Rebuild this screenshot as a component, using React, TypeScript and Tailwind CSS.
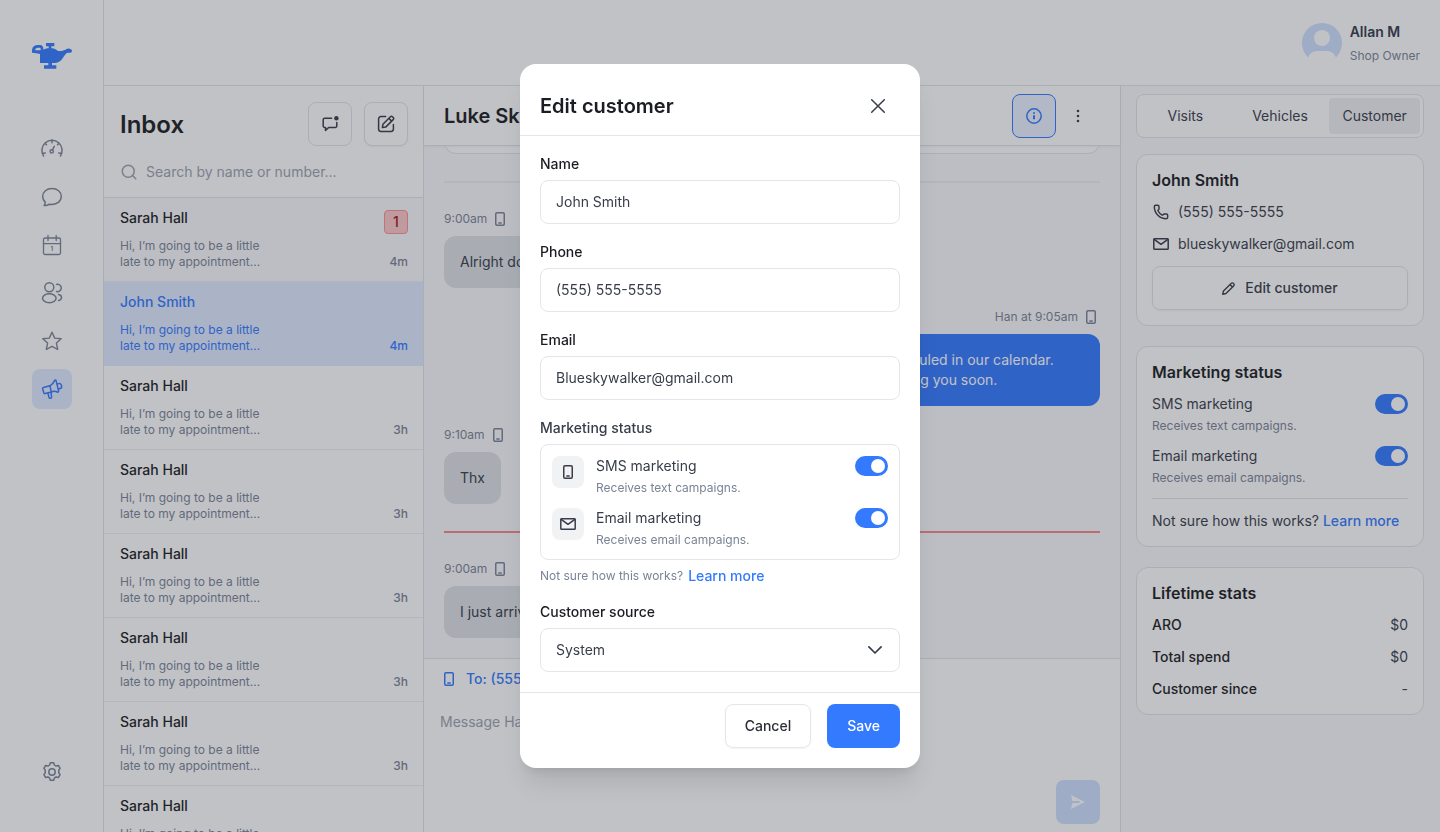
import { useState } from "react";
import type { ReactNode, SVGProps } from "react";
import { Phone, Search } from "lucide-react";
import clsx from "clsx";

type IconProps = SVGProps<SVGSVGElement>;

function Icon({ children, ...props }: IconProps & { children: ReactNode }) {
  return (
    <svg
      viewBox="0 0 24 24"
      width={24}
      height={24}
      fill="none"
      stroke="currentColor"
      strokeWidth={1.5}
      strokeLinecap="round"
      strokeLinejoin="round"
      aria-hidden="true"
      {...props}
    >
      {children}
    </svg>
  );
}

const GaugeIcon = () => (
  <Icon>
    <path d="M3.6 19a10.1 10.1 0 1 1 16.8 0" />
    <path d="M3.3 16.3l2-.4M20.700 16.300l-2-.4M12 3v2.800M5.200 6.500l1.300 1.300M18.800 6.500l-1.300 1.300" />
    <circle cx="11.7" cy="14.4" r="1.6" />
    <path d="M12.400 12.900l1.900-3.600" />
  </Icon>
);

const ChatIcon = () => (
  <Icon>
    <path d="M12 19.400c5.300 0 9.300-3.500 9.300-8s-4-7.900-9.300-7.900-9.300 3.400-9.300 7.900c0 2.200.9 4.200 2.500 5.700.1 1.300-.3 2.400-1.100 3.500 2 .1 3.900-.3 5.300-1.400.8.100 1.700.2 2.600.2Z" />
  </Icon>
);

const CalendarIcon = () => (
  <Icon strokeWidth={1.3}>
    <rect x="3.5" y="5" width="17" height="16.5" rx="1.5" />
    <path d="M3.5 10.7h17M8 2.500v5M16.200 2.500v5" />
    <text
      x="11.8"
      y="18.2"
      textAnchor="middle"
      fontSize="6"
      fontWeight="700"
      fill="currentColor"
      stroke="none"
    >
      1
    </text>
  </Icon>
);

const UsersIcon = () => (
  <Icon>
    <circle cx="9.3" cy="6.200" r="4.500" />
    <ellipse cx="9.3" cy="17.300" rx="6.800" ry="4.500" />
    <path d="M16.500 3.400a3.700 3.700 0 1 1 0 7.100M18.500 13.600c1.800.4 3 1.500 3 2.900s-1.200 2.600-3 3.100" />
  </Icon>
);

const StarIcon = () => (
  <Icon strokeWidth={1.4}>
    <path d="M12 3.200l2.700 5.900 6.500.7-4.800 4.300 1.300 6.400L12 17.300l-5.700 3.200 1.300-6.400-4.800-4.300 6.500-.7Z" />
  </Icon>
);

const MegaphoneIcon = () => (
  <Icon>
    <path d="M3.500 10.400l6.400-1.600 1.500 6.300-6.200 1.500a1.200 1.200 0 0 1-1.400-.9l-1.200-4a1.100 1.100 0 0 1 .9-1.300Z" />
    <path d="M9.900 8.800c2.200-1.100 3.700-2.800 4.700-5.200.3-.7 1.300-.7 1.500 0l2.500 10.400c.2.800-.6 1.400-1.300 1-1.900-1-3.800-1.200-5.900.1M17.200 7.100l1.800-.5c1.300-.3 2.200.8 2.500 2.100.3 1.400 0 2.600-1.200 2.900l-1.900.5M8 16.100l.9 4.100c.2.800.9 1.300 1.600 1.100.8-.2 1.300-.9 1.100-1.700L10.900 15.500" />
  </Icon>
);

const GearIcon = () => (
  <Icon>
    <circle cx="12" cy="12" r="3.200" />
    <path d="M10.300 2.800h3.400l.7 2.300c.6.200 1.200.6 1.700 1l2.300-.6 1.700 2.900-1.400 1.800c.2.900.2 1.700 0 2.600l1.400 1.800-1.700 2.900-2.300-.6c-.5.400-1.100.8-1.700 1l-.7 2.300h-3.400l-.7-2.300c-.6-.2-1.200-.6-1.700-1l-2.300.6-1.700-2.900 1.400-1.800c-.2-.9-.2-1.700 0-2.600L3.900 8.400l1.700-2.900 2.300.6c.5-.4 1.100-.8 1.700-1Z" />
  </Icon>
);

const MobileIcon = (props: IconProps) => (
  <Icon viewBox="0 0 10 14" width={10} height={14} {...props}>
    <rect x=".75" y=".75" width="8.500" height="12.500" rx="1.200" />
    <path d="M3.800 11h2.400" />
  </Icon>
);

const MailIcon = () => (
  <Icon viewBox="0 0 16 12" width={16} height={12}>
    <rect x=".8" y=".8" width="14.400" height="10.400" rx=".8" />
    <path d="M1.200 1.300L8 6.300l6.800-5" />
  </Icon>
);

const PencilIcon = () => (
  <Icon viewBox="0 0 14 14" width={13} height={13}>
    <path d="M.8 13.200l.8-3.500 8.200-8.200a1.700 1.700 0 0 1 2.500 0l.2.200a1.700 1.700 0 0 1 0 2.500l-8.200 8.200-3.500.8ZM8.600 2.800l2.600 2.600" />
  </Icon>
);

const SquarePenIcon = () => (
  <Icon viewBox="0 0 18 18" width={18} height={18}>
    <path d="M8.600 1.600H4A2.400 2.400 0 0 0 1.600 4v10A2.400 2.400 0 0 0 4 16.400h10a2.400 2.400 0 0 0 2.400-2.400V9.400" />
    <path d="M5.400 12.600l.5-3.300 7.500-7.500a1.500 1.500 0 0 1 2.100 0l.7.700a1.500 1.500 0 0 1 0 2.100l-7.500 7.500-3.300.5ZM11.900 3.400l2.700 2.700" />
  </Icon>
);

const UnreadIcon = () => (
  <Icon viewBox="0 0 18 18" width={18} height={18}>
    <path d="M10.600 3.300H3.700a1.500 1.500 0 0 0-1.500 1.500V11a1.500 1.500 0 0 0 1.500 1.500h.8v2.900l3.200-2.900h6.600a1.500 1.500 0 0 0 1.500-1.500V7.500" />
    <circle cx="15.400" cy="3.300" r="2.200" fill="currentColor" stroke="none" />
  </Icon>
);

const InfoIcon = () => (
  <Icon viewBox="0 0 16 16" width={16} height={16}>
    <circle cx="8" cy="8" r="7.200" />
    <path d="M8 7.200v4" strokeWidth={2} strokeLinecap="butt" />
    <circle cx="8" cy="4.900" r="1" fill="currentColor" stroke="none" />
  </Icon>
);

const Logo = () => (
  <svg viewBox="0 0 120 78" width={40} height={26} fill="#337aff" role="img" aria-label="Lamp">
    <path d="M42 0h25v10h-9v6h-8v-6h-8Z" />
    <path d="M24 27c8-8 20-12 30-12s18 3 24 9c8 1 16-1 22-4 5-3 10-4 13-3l6 3c2 4 0 8-3 9-4 1-7 0-10 0-6 4-10 10-14 17-6 9-12 13-22 14H24Z" />
    <path d="M49 58h11v9h13v10H36V67h13Z" />
    <path
      fillRule="evenodd"
      d="M0 29v-8C1 11 8 6 18 6h8c5 1 8 5 8 10v12l-9 5L8 30ZM9 22h17v-5c0-2-2-3-4-3h-4c-5 0-8 3-9 8Z"
    />
  </svg>
);

const Avatar = () => (
  <svg viewBox="0 0 40 40" width={40} height={40} role="img" aria-label="Allan M">
    <circle cx="20" cy="20" r="20" fill="#cfe0ff" />
    <circle cx="20" cy="15" r="8" fill="#fff" />
    <path d="M5 40c0-7 4-12 10-12h10c6 0 10 5 10 12Z" fill="#fff" />
  </svg>
);

function Toggle({ id }: { id: string }) {
  const [on, setOn] = useState(true);
  return (
    <input
      id={id}
      type="checkbox"
      role="switch"
      checked={on}
      onChange={() => setOn(!on)}
      className="relative h-5 w-[33px] shrink-0 cursor-pointer appearance-none rounded-full bg-gray-300 before:absolute before:top-[3px] before:left-[3px] before:size-3.5 before:rounded-full before:bg-white checked:bg-[#337aff] checked:before:left-4"
    />
  );
}

const NAV = [
  { label: "Dashboard", icon: GaugeIcon },
  { label: "Messages", icon: ChatIcon },
  { label: "Calendar", icon: CalendarIcon },
  { label: "Customers", icon: UsersIcon },
  { label: "Reviews", icon: StarIcon },
  { label: "Campaigns", icon: MegaphoneIcon, active: true },
];

function Sidebar() {
  return (
    <aside className="flex w-26 shrink-0 flex-col items-center border-r border-[#e1e3e7] bg-white pt-[43px] pb-10">
      <Logo />
      <nav className="mt-15 flex flex-col gap-2">
        {NAV.map(({ label, icon: NavIcon, active }) => (
          <a
            key={label}
            href="#"
            aria-label={label}
            className={clsx(
              "grid size-10 place-items-center rounded-lg",
              active ? "bg-[#e0eaff] text-[#337aff]" : "text-[#7a8496]",
            )}
          >
            <NavIcon />
          </a>
        ))}
      </nav>
      <a
        href="#"
        aria-label="Settings"
        className="mt-auto grid size-10 place-items-center text-[#7a8496]"
      >
        <GearIcon />
      </a>
    </aside>
  );
}

const THREADS = [
  { name: "Sarah Hall", time: "4m", unread: 1 },
  { name: "John Smith", time: "4m", active: true },
  { name: "Sarah Hall", time: "3h" },
  { name: "Sarah Hall", time: "3h" },
  { name: "Sarah Hall", time: "3h" },
  { name: "Sarah Hall", time: "3h" },
  { name: "Sarah Hall", time: "3h" },
  { name: "Sarah Hall", time: "3h" },
];

const iconButton =
  "grid size-11 place-items-center rounded-lg border border-[#e1e3e7] bg-white text-[#383d49]";

function Inbox() {
  return (
    <section className="flex w-80 shrink-0 flex-col overflow-hidden border-r border-[#e1e3e7] bg-white">
      <div className="flex items-center gap-3 pt-4 pr-[15px] pl-4">
        <h1 className="flex-1 pt-0.5 text-2xl font-semibold text-[#1b1d22]">Inbox</h1>
        <button type="button" aria-label="Unread" className={iconButton}>
          <UnreadIcon />
        </button>
        <button type="button" aria-label="Compose" className={clsx(iconButton, "shadow-xs")}>
          <SquarePenIcon />
        </button>
      </div>
      <label className="flex h-13 shrink-0 items-center gap-2 border-b border-[#e1e3e7] px-4 text-[#9ba3af]">
        <Search size={18} strokeWidth={2} />
        <input
          aria-label="Search"
          placeholder="Search by name or number..."
          className="min-w-0 flex-1 text-sm outline-none placeholder:text-[#9ba3af]"
        />
      </label>
      <ul>
        {THREADS.map((t, i) => (
          <li
            key={i}
            className={clsx(
              "flex h-21 justify-between border-b pt-2.5 pr-[15px] pl-4",
              t.active
                ? "border-[#e0eaff] bg-[#e0eaff] text-[#337aff]"
                : "border-[#eceef1] text-[#7a8496]",
              t.unread && "bg-[#f9fafb]",
            )}
          >
            <div className="flex flex-col gap-2.5">
              <h2 className={clsx("text-sm font-medium", !t.active && "text-[#1b1d22]")}>
                {t.name}
              </h2>
              <p className="max-w-[148px] text-xs">
                Hi, I’m going to be a little late to my appointment...
              </p>
            </div>
            <div className="flex flex-col items-end justify-between pb-[11px]">
              {t.unread ? (
                <span className="mt-0.5 grid size-6 place-items-center rounded-sm border border-[#fb9292] bg-[#fdc8c8] text-sm font-medium text-[#a3131a]">
                  {t.unread}
                </span>
              ) : (
                <span />
              )}
              <span className="text-xs font-medium">{t.time}</span>
            </div>
          </li>
        ))}
      </ul>
    </section>
  );
}

function Message({ meta, text }: { meta: string; text: string }) {
  return (
    <div className="flex flex-col items-start gap-2">
      <div className="flex h-4.5 items-center gap-2 text-xs text-[#7a8496]">
        {meta} <MobileIcon />
      </div>
      <p className="rounded-xl bg-[#dde1e5] p-4 text-sm text-[#383d49]">{text}</p>
    </div>
  );
}

function Chat() {
  return (
    <main className="flex min-w-0 flex-1 flex-col bg-[#f9fafb]">
      <header className="z-10 flex h-15 shrink-0 items-center border-b border-[#e1e3e7] bg-white px-5 shadow-xs">
        <h2 className="flex-1 text-xl font-semibold text-[#1b1d22]">Luke Skywalker</h2>
        <button
          type="button"
          aria-label="Customer info"
          className="grid size-11 place-items-center rounded-lg border border-[#337aff] bg-[#ebf1ff] text-[#337aff]"
        >
          <InfoIcon />
        </button>
        <button
          type="button"
          aria-label="More"
          className="grid size-11 place-items-center text-[#383d49]"
        >
          <svg viewBox="0 0 4 14" width={4} height={14} fill="currentColor">
            <circle cx="2" cy="2" r="1.300" />
            <circle cx="2" cy="7" r="1.300" />
            <circle cx="2" cy="12" r="1.300" />
          </svg>
        </button>
      </header>

      <div className="flex min-h-0 flex-1 flex-col justify-end gap-5 overflow-hidden px-5 pb-5">
        <div className="h-20 shrink-0 rounded-xl border border-[#e1e3e7] bg-white" />
        <hr className="my-[7px] border-t-2 border-[#eceef1]" />
        <Message meta="9:00am" text="Alright does 10 work for you?" />
        <div className="flex flex-col items-end gap-2">
          <div className="flex h-4.5 items-center gap-2 pr-1 text-xs text-[#7a8496]">
            Han at 9:05am <MobileIcon />
          </div>
          <p className="max-w-[360px] rounded-xl bg-[#337aff] p-4 text-sm text-white">
            Alright, I have you scheduled in our calendar. Looking forward to seeing you soon.
          </p>
        </div>
        <Message meta="9:10am" text="Thx" />
        <hr className="my-[7px] border-t-2 border-[#f58985]" />
        <Message meta="9:00am" text="I just arrived" />
      </div>

      <form className="flex h-[174px] shrink-0 flex-col border-t border-[#e1e3e7] bg-white px-5 pt-2.5 pb-2">
        <div className="flex items-center gap-3 text-sm font-medium text-[#337aff]">
          <MobileIcon /> To: (555) 555-5555
        </div>
        <textarea
          aria-label="Message"
          placeholder="Message Han"
          className="mt-[21px] -ml-1 flex-1 resize-none text-sm leading-6 outline-none placeholder:text-[#9ba3af]"
        />
        <button
          type="button"
          aria-label="Send"
          className="grid size-11 place-items-center self-end rounded-lg bg-[#cfe0ff] text-white"
        >
          <svg viewBox="0 0 14 14" width={14} height={14} fill="currentColor">
            <path d="M0 0l14 7L0 14l1.400-6H8.500V6H1.400Z" />
          </svg>
        </button>
      </form>
    </main>
  );
}

const card = "rounded-xl border border-[#e1e3e7] bg-white p-[15px]";
const cardTitle = "text-base leading-5 font-semibold text-[#1b1d22]";

const OPTIONS = [
  { id: "sms", title: "SMS marketing", hint: "Receives text campaigns.", icon: MobileIcon },
  { id: "email", title: "Email marketing", hint: "Receives email campaigns.", icon: MailIcon },
];

const STATS = [
  ["ARO", "$0"],
  ["Total spend", "$0"],
  ["Customer since", "-"],
];

function CustomerPanel() {
  return (
    <aside className="w-80 shrink-0 border-l border-[#e1e3e7] bg-[#f9fafb] pt-2 pr-4 pl-[15px] text-sm text-[#383d49]">
      <div className="grid h-11 grid-cols-3 gap-1 rounded-lg border border-[#e1e3e7] bg-white p-[3px]">
        {["Visits", "Vehicles", "Customer"].map((tab) => (
          <button
            key={tab}
            type="button"
            className={clsx("rounded", tab === "Customer" && "bg-[#eff0f1]")}
          >
            {tab}
          </button>
        ))}
      </div>

      <section className={clsx(card, "mt-4 flex flex-col gap-3")}>
        <h3 className={cardTitle}>John Smith</h3>
        <div className="flex items-center gap-2">
          <span className="grid w-4.5 place-items-center">
            <Phone size={16} strokeWidth={2.2} />
          </span>
          (555) 555-5555
        </div>
        <div className="flex items-center gap-2">
          <span className="grid w-4.5 place-items-center">
            <MailIcon />
          </span>
          blueskywalker@gmail.com
        </div>
        <button
          type="button"
          className="flex h-11 items-center justify-center gap-2.5 rounded-lg border border-[#e1e3e7] font-medium shadow-xs"
        >
          <PencilIcon /> Edit customer
        </button>
      </section>

      <section className={clsx(card, "mt-5 flex flex-col gap-3")}>
        <h3 className={cardTitle}>Marketing status</h3>
        {OPTIONS.map((o) => (
          <div key={o.id} className="flex justify-between">
            <label htmlFor={`panel-${o.id}`} className="flex flex-col gap-1">
              {o.title}
              <span className="text-xs text-[#7a8496]">{o.hint}</span>
            </label>
            <Toggle id={`panel-${o.id}`} />
          </div>
        ))}
        <p className="border-t border-[#e1e3e7] pt-3">
          Not sure how this works?{" "}
          <a href="#" className="font-medium text-[#337aff]">
            Learn more
          </a>
        </p>
      </section>

      <section className={clsx(card, "mt-5 flex flex-col gap-3")}>
        <h3 className={cardTitle}>Lifetime stats</h3>
        <dl className="flex flex-col gap-3">
          {STATS.map(([label, value]) => (
            <div key={label} className="flex justify-between">
              <dt className="font-medium text-[#1b1d22]">{label}</dt>
              <dd>{value}</dd>
            </div>
          ))}
        </dl>
      </section>
    </aside>
  );
}

const field =
  "h-11 w-full appearance-none rounded-lg border border-[#e5e6ea] bg-white px-[15px] text-sm text-[#383d49] outline-none";

const FIELDS = [
  { id: "name", label: "Name", type: "text", value: "John Smith" },
  { id: "phone", label: "Phone", type: "tel", value: "(555) 555-5555" },
  { id: "email", label: "Email", type: "email", value: "Blueskywalker@gmail.com" },
];

function EditCustomerModal() {
  return (
    <div className="fixed inset-0 z-20 flex items-center justify-center bg-[#2a2d3a]/29">
      <div
        role="dialog"
        aria-labelledby="modal-title"
        className="w-full max-w-[400px] rounded-2xl bg-white shadow-xl"
      >
        <header className="flex h-18 items-center justify-between border-b border-[#e5e6ea] px-5 pt-3">
          <h2 id="modal-title" className="text-xl font-semibold text-[#1b1d22]">
            Edit customer
          </h2>
          <button
            type="button"
            aria-label="Close"
            className="grid size-11 place-items-center text-[#383d49]"
          >
            <Icon viewBox="0 0 14 14" width={14} height={14}>
              <path d="M.7.7l12.600 12.600M13.300.7L.7 13.300" />
            </Icon>
          </button>
        </header>

        <form className="flex flex-col gap-4 px-5 pt-4 pb-5">
          {FIELDS.map((f) => (
            <div key={f.id} className="flex flex-col gap-1">
              <label htmlFor={f.id} className="text-sm leading-6 font-medium text-[#1b1d22]">
                {f.label}
              </label>
              <input
                id={f.id}
                type={f.type}
                defaultValue={f.value}
                className={clsx(field, "pb-0.5")}
              />
            </div>
          ))}

          <fieldset>
            <legend className="mb-1 text-sm leading-6 font-medium text-[#383d49]">
              Marketing status
            </legend>
            <div className="flex flex-col gap-3 rounded-lg border border-[#e5e6ea] p-[11px]">
              {OPTIONS.map((o) => (
                <div key={o.id} className="flex gap-3">
                  <span className="grid size-8 place-items-center rounded-lg bg-[#f1f2f4] text-[#383d49]">
                    <o.icon />
                  </span>
                  <label
                    htmlFor={`modal-${o.id}`}
                    className="flex flex-1 flex-col gap-1 text-sm text-[#383d49]"
                  >
                    {o.title}
                    <span className="text-xs text-[#7a8496]">{o.hint}</span>
                  </label>
                  <Toggle id={`modal-${o.id}`} />
                </div>
              ))}
            </div>
            <p className="mt-2 flex h-4 items-center gap-[5px] text-xs text-[#7a8496]">
              Not sure how this works?
              <a href="#" className="text-sm font-medium text-[#337aff]">
                Learn more
              </a>
            </p>
          </fieldset>

          <div className="flex flex-col gap-1">
            <label htmlFor="source" className="text-sm leading-6 font-medium text-[#1b1d22]">
              Customer source
            </label>
            <div className="relative">
              <select id="source" className={field}>
                <option>System</option>
              </select>
              <Icon
                viewBox="0 0 14 8"
                width={14}
                height={8}
                strokeWidth={1.7}
                className="pointer-events-none absolute top-[18px] right-4.5 text-[#383d49]"
              >
                <path d="M.9.9L7 7l6.100-6.100" />
              </Icon>
            </div>
          </div>
        </form>

        <footer className="flex justify-end gap-4 border-t border-[#e5e6ea] px-5 pt-[11px] pb-5">
          <button
            type="button"
            className="h-11 rounded-lg border border-[#e5e6ea] px-[19px] text-sm font-medium text-[#2b2f38] shadow-xs"
          >
            Cancel
          </button>
          <button
            type="button"
            className="h-11 rounded-lg bg-[#337aff] px-5 text-sm font-medium text-white"
          >
            Save
          </button>
        </footer>
      </div>
    </div>
  );
}

export default function App() {
  return (
    <div className="flex h-screen overflow-hidden bg-white font-['Inter',sans-serif]">
      <Sidebar />
      <div className="flex min-w-0 flex-1 flex-col">
        <header className="flex h-[86px] shrink-0 items-center justify-end gap-2 border-b border-[#e1e3e7] bg-white px-5">
          <Avatar />
          <div className="pt-0.5">
            <p className="text-sm leading-6 font-semibold text-[#343b4b]">Allan M</p>
            <p className="text-xs leading-6 text-[#7a8496]">Shop Owner</p>
          </div>
        </header>
        <div className="flex min-h-0 flex-1">
          <Inbox />
          <Chat />
          <CustomerPanel />
        </div>
      </div>
      <EditCustomerModal />
    </div>
  );
}
